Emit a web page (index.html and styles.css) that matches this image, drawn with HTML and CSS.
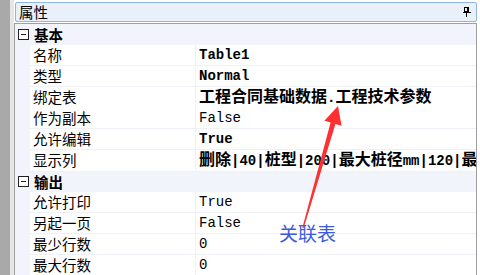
FILE: index.html
```html
<!DOCTYPE html>
<html>
<head>
<meta name="viewport" content="width=device-width, initial-scale=1">
<link rel="stylesheet" href="styles.css">
</head>
<body>

<div class="window">
  <div class="dock"></div>
  <div class="edge"></div>

  <div class="panel">
    <div class="title">
      <span>属性</span>
      <svg class="pin" width="8" height="10" viewBox="0 0 8 10">
        <rect x="1.5" y="0.5" width="4" height="4" fill="none" stroke="#000"/>
        <rect x="4" y="0" width="2" height="5" fill="#000"/>
        <rect x="0" y="5" width="8" height="1" fill="#000"/>
        <rect x="3" y="6" width="1" height="4" fill="#000"/>
      </svg>
    </div>

    <div class="grid">
      <div class="cat"><span class="box"></span><b>基本</b></div>
      <div class="row"><span class="gut"></span><span class="name">名称</span><span class="val bold">Table1</span></div>
      <div class="row"><span class="gut"></span><span class="name">类型</span><span class="val bold">Normal</span></div>
      <div class="row"><span class="gut"></span><span class="name">绑定表</span><span class="val bold"><i>工程合同基础数据</i>.<i>工程技术参数</i></span></div>
      <div class="row"><span class="gut"></span><span class="name">作为副本</span><span class="val">False</span></div>
      <div class="row"><span class="gut"></span><span class="name">允许编辑</span><span class="val bold">True</span></div>
      <div class="row"><span class="gut"></span><span class="name">显示列</span><span class="val bold"><i>删除</i>|40|<i>桩型</i>|200|<i>最大桩径</i>mm|120|<i>最小桩径</i></span></div>

      <div class="cat"><span class="box"></span><b>输出</b></div>
      <div class="row"><span class="gut"></span><span class="name">允许打印</span><span class="val">True</span></div>
      <div class="row"><span class="gut"></span><span class="name">另起一页</span><span class="val">False</span></div>
      <div class="row"><span class="gut"></span><span class="name">最少行数</span><span class="val">0</span></div>
      <div class="row"><span class="gut"></span><span class="name">最大行数</span><span class="val">0</span></div>
    </div>
  </div>

  <!-- annotation drawn over the grid -->
  <svg class="arrow" width="480" height="275" viewBox="0 0 480 275">
    <polygon fill="#ff3030" points="302.3,228 303.7,228 335.4,124 341.6,125.8 338,106 324.4,120.8 330.6,122.6"/>
  </svg>
  <div class="note">关联表</div>
</div>

</body>
</html>
```

FILE: styles.css
```css
body {
  margin: 0;
  font-family: "Noto Sans CJK SC", sans-serif;
  background-color: #fff;
}

* {
  box-sizing: border-box;
}

.window {
  position: relative;
  display: flex;
  width: 480px;
  height: 275px;
  overflow: hidden;
}

.dock {
  flex: none;
  width: 10px;
  background-color: #a9a9a9;
}

.edge {
  flex: none;
  width: 4px;
  background-color: #e6e6e6;
}

.panel {
  flex: 1;
  min-width: 0;
  padding-top: 2px;
}

.title {
  display: flex;
  align-items: center;
  justify-content: space-between;
  height: 20px;
  margin: 0 3px 0 1px;
  padding: 0 5px 0 3px;
  border: 1px solid #8fb4e6;
  border-radius: 2px;
  background-color: #e9f0fa;
  font-size: 14.5px;
  line-height: 18px;
  color: #000;
}

.pin {
  display: block;
}

.grid {
  margin: 1px 3px 0 0;
  border-top: 1px solid #a0a0a0;
  border-left: 1px solid #a0a0a0;
  border-right: 1px solid #a0a0a0;
  height: 260px;
  background-color: #f1f5fb;
}

.cat {
  display: flex;
  align-items: center;
  height: 21px;
  padding-left: 3px;
  font-size: 14.5px;
}

.cat b {
  margin-left: 5px;
  font-weight: bold;
}

/* the collapse box in front of a category */
.box {
  position: relative;
  width: 11px;
  height: 11px;
  border: 1px solid #222;
  background-color: #fff;
}

.box:after {
  position: absolute;
  content: "";
  left: 2px;
  top: 4px;
  width: 5px;
  height: 1px;
  background-color: #222;
}

.row {
  display: grid;
  grid-template-columns: 15px 166px minmax(0, 1fr);
  height: 21px;
}

.name, .val {
  min-width: 0;
  background-color: #fff;
  border-bottom: 1px solid #eef2f8;
  white-space: nowrap;
  overflow-x: clip;
  line-height: 20px;
}

.name {
  padding-left: 3px;
  border-right: 1px solid #eef2f8;
  font-size: 14.5px;
  color: #000;
}

.val {
  padding-left: 3px;
  font-family: "Liberation Mono", monospace;
  font-size: 14px;
  color: #000;
}

.val i {
  font-style: normal;
  font-family: "Noto Sans CJK SC", sans-serif;
  font-size: 16px;
  line-height: 1;
}

.bold {
  font-weight: bold;
}

.arrow {
  position: absolute;
  left: 0;
  top: 0;
}

.note {
  position: absolute;
  left: 279px;
  top: 220px;
  font-size: 19px;
  line-height: 26px;
  color: #3b5bdb;
}
```
